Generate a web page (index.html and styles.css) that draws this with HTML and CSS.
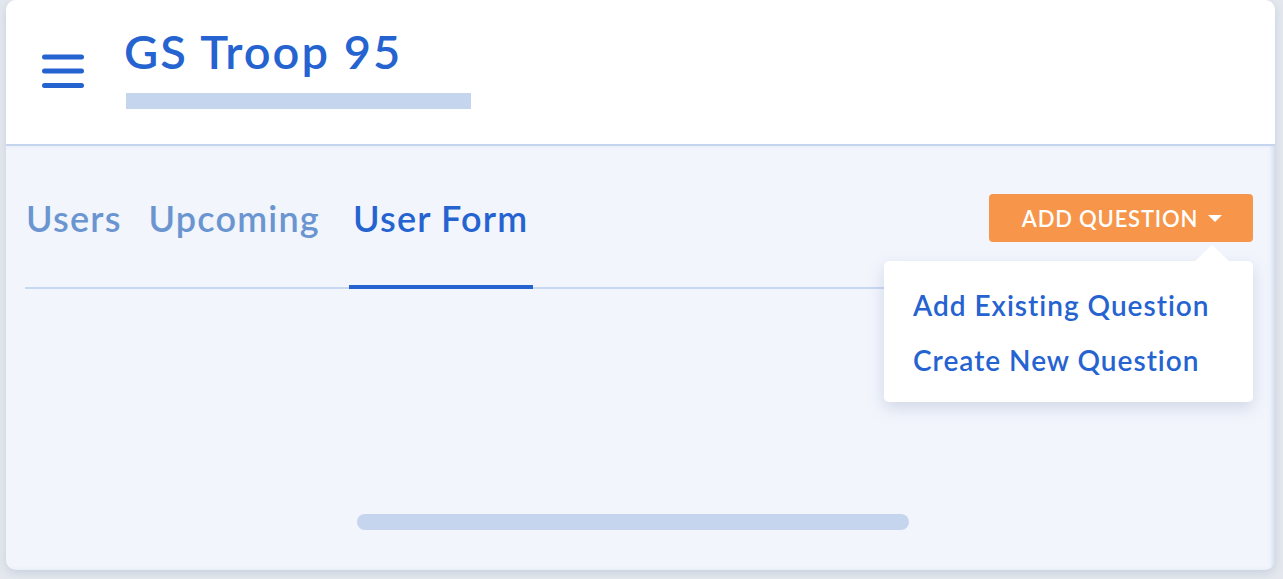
FILE: index.html
```html
<!DOCTYPE html>
<html lang="en">
<head>
<meta charset="utf-8">
<title>GS Troop 95</title>
<link rel="stylesheet" href="styles.css">
</head>
<body>
<div class="card">
  <header class="header">
    <button class="menu" aria-label="Menu">
      <svg width="42" height="34" viewBox="0 0 42 34">
        <g stroke="#2563d0" stroke-width="5" stroke-linecap="round">
          <line x1="2.5" y1="3" x2="39.5" y2="3"/>
          <line x1="2.5" y1="17" x2="39.5" y2="17"/>
          <line x1="2.5" y1="31.5" x2="39.5" y2="31.5"/>
        </g>
      </svg>
    </button>
    <div class="title-block">
      <h1 class="title">GS Troop 95</h1>
      <div class="subtitle-placeholder"></div>
    </div>
  </header>
  <main class="content">
    <div class="toolbar">
      <nav class="tabs">
        <a class="tab">Users</a>
        <a class="tab">Upcoming</a>
        <a class="tab active">User Form</a>
      </nav>
      <div class="dropdown">
        <button class="add-btn">ADD QUESTION <span class="caret"></span></button>
        <div class="menu-pop">
          <a class="menu-item">Add Existing Question</a>
          <a class="menu-item">Create New Question</a>
        </div>
      </div>
    </div>
    <div class="bottom-bar"></div>
  </main>
</div>
</body>
</html>
```

FILE: styles.css
```css
* { box-sizing: border-box; }
html, body { margin: 0; padding: 0; }
body {
  background: #e4e8ee;
  width: 1283px;
  height: 579px;
  overflow: hidden;
  font-family: Lato, "Open Sans", sans-serif;
}
.card {
  margin-left: 6px;
  width: 1269px;
  height: 570px;
  border-radius: 10px;
  overflow: hidden;
  background: #f2f5fc;
  box-shadow: 0 3px 10px rgba(120, 140, 170, 0.25);
  display: flex;
  flex-direction: column;
}
.header {
  background: #fff;
  height: 146px;
  border-bottom: 2px solid #c5d5ee;
  display: flex;
  align-items: flex-start;
  padding-left: 36px;
}
.menu {
  border: 0;
  background: none;
  padding: 0;
  margin-top: 54px;
  width: 42px;
  height: 34px;
  display: block;
}
.menu svg { display: block; }
.title-block {
  margin-left: 40px;
  padding-top: 22px;
}
.title {
  margin: 0;
  font-size: 47px;
  font-weight: 600;
  color: #2563d0;
  line-height: 58px;
  letter-spacing: 2px;
}
.subtitle-placeholder {
  margin-top: 13px;
  margin-left: 2px;
  width: 345px;
  height: 16px;
  background: #c5d5ee;
}
.content {
  flex: 1;
  display: flex;
  flex-direction: column;
  padding: 48px 22px 40px 19px;
  box-shadow: inset -4px 0 5px -2px rgba(160, 180, 210, 0.45);
}
.toolbar {
  display: flex;
  justify-content: space-between;
  align-items: flex-start;
  border-bottom: 2px solid #c9d8f0;
  height: 95px;
}
.tabs {
  display: flex;
  gap: 19px;
  height: 95px;
  margin-left: -3px;
}
.tab {
  font-size: 36px;
  font-weight: 600;
  color: #6a95d0;
  line-height: 48px;
  letter-spacing: 1.2px;
  padding: 0 4px;
  height: 95px;
  white-space: nowrap;
}
.tab.active {
  margin-left: 6px;
  padding: 0 5px 0 4px;
  color: #2563d0;
  border-bottom: 4px solid #2563d0;
}
.dropdown {
  position: relative;
}
.add-btn {
  display: flex;
  align-items: center;
  gap: 10px;
  height: 48px;
  width: 264px;
  justify-content: center;
  border: 0;
  border-radius: 4px;
  background: #f7964a;
  color: #fff;
  font-family: Lato, "Open Sans", sans-serif;
  font-size: 22px;
  font-weight: 600;
  letter-spacing: 0.8px;
  padding: 0 0 0 2px;
}
.caret {
  width: 0;
  height: 0;
  border-left: 7px solid transparent;
  border-right: 7px solid transparent;
  border-top: 7px solid #fff;
}
.menu-pop {
  position: absolute;
  right: 0;
  top: 67px;
  width: 369px;
  height: 141px;
  background: #fff;
  border-radius: 5px;
  box-shadow: 0 6px 16px rgba(110, 130, 170, 0.25);
  padding: 17px 20px 0 29px;
  display: flex;
  flex-direction: column;
  z-index: 2;
}
.menu-pop::before {
  content: "";
  position: absolute;
  top: -16px;
  right: 24px;
  width: 0;
  height: 0;
  border-left: 17px solid transparent;
  border-right: 17px solid transparent;
  border-bottom: 16px solid #fff;
}
.menu-item {
  font-size: 28px;
  font-weight: 600;
  color: #2563d0;
  line-height: 55px;
  letter-spacing: 1px;
  white-space: nowrap;
}
.bottom-bar {
  margin-top: auto;
  margin-left: 332px;
  width: 552px;
  height: 16px;
  border-radius: 8px;
  background: #c5d5ee;
}
```
